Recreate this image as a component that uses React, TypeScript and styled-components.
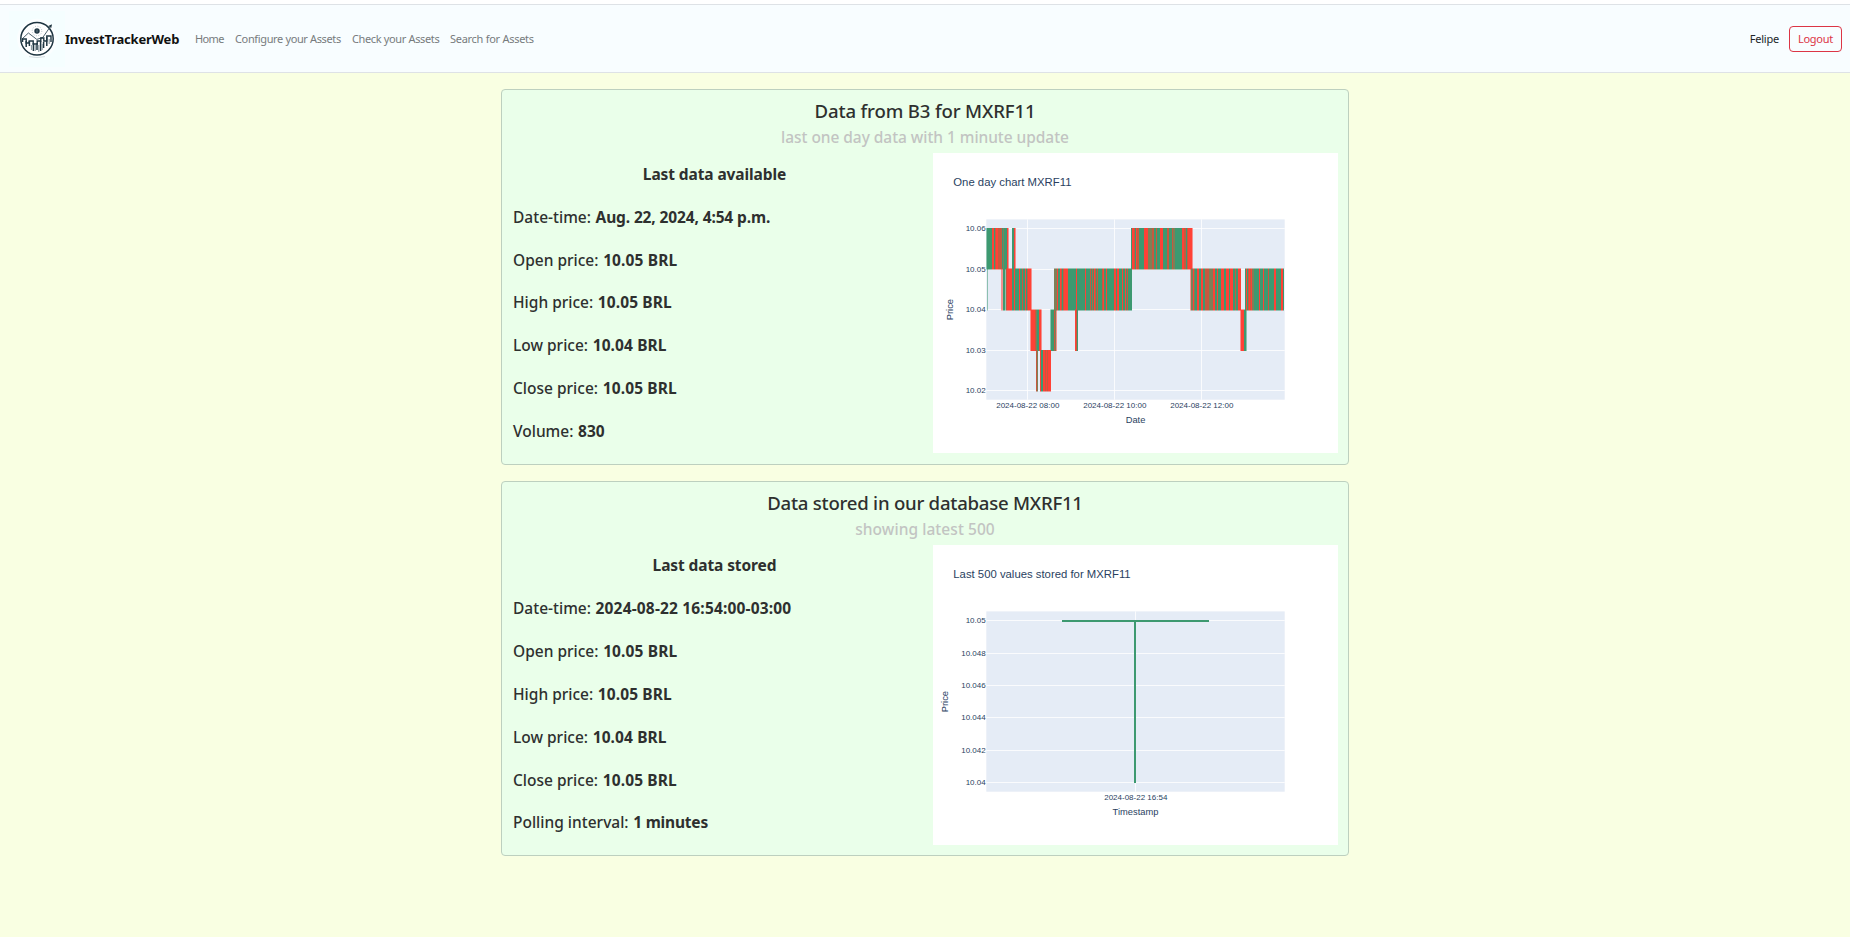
import React from 'react';
import styled, { createGlobalStyle } from 'styled-components';

const GlobalStyle = createGlobalStyle`
  * { box-sizing: border-box; }
  body {
    margin: 0;
    min-height: 100vh;
    background: #f9ffe2;
    color: #2e302f;
    font-family: 'Noto Sans', 'Open Sans', sans-serif;
    overflow: hidden;
  }
  h2, h3, h4, p { margin: 0; }
`;

const TopStrip = styled.div`
  height: 4px;
  background: #fff;
`;

const Navbar = styled.nav`
  display: flex;
  align-items: center;
  height: 69px;
  padding: 0 8px 0 9px;
  background: #f8fdff;
  border-top: 1px solid #dee2e6;
  border-bottom: 1px solid #dee2e6;
`;

const Brand = styled.a`
  display: flex;
  align-items: center;
  width: 186px;
  color: #111;
  font-size: 13px;
  font-weight: 700;
  letter-spacing: -0.22px;
  white-space: nowrap;
`;

const NavLink = styled.a<{ $width: number; $spacing: number }>`
  width: ${(p) => p.$width}px;
  color: #777b7d;
  font-size: 11px;
  letter-spacing: ${(p) => p.$spacing}px;
  white-space: nowrap;
`;

const UserName = styled.span`
  margin-left: auto;
  margin-right: 10px;
  color: #212529;
  font-size: 11px;
  letter-spacing: -0.2px;
`;

const LogoutButton = styled.button`
  width: 53px;
  height: 26px;
  padding: 0;
  background: transparent;
  border: 1px solid #dc3545;
  border-radius: 4px;
  color: #dc3545;
  font: 400 11px 'Noto Sans', sans-serif;
  letter-spacing: -0.25px;
`;

const Main = styled.main`
  display: flex;
  flex-direction: column;
  align-items: center;
  gap: 16px;
  padding-top: 16.3px;
`;

const Card = styled.section`
  width: 848px;
  height: 375.4px;
  padding: 0 10px;
  background: #eaffea;
  border: 1px solid #bdd0bf;
  border-radius: 4px;
`;

const CardHeader = styled.header`
  height: 63px;
  padding-top: 8px;
  text-align: center;
`;

const Title = styled.h2<{ $spacing: number }>`
  font-size: 18.6px;
  font-weight: 500;
  line-height: 25px;
  letter-spacing: ${(p) => p.$spacing}px;
`;

const Subtitle = styled.h3<{ $spacing: number }>`
  color: #c2c4c2;
  font-size: 15.5px;
  font-weight: 500;
  line-height: 28.6px;
  letter-spacing: ${(p) => p.$spacing}px;
`;

const Columns = styled.div`
  display: grid;
  grid-template-columns: 405px 405px;
  column-gap: 16px;
  height: 300px;
`;

const Facts = styled.div`
  display: grid;
  grid-template-rows: repeat(7, 1fr);
  align-items: center;
`;

const FactsHeading = styled.h4`
  padding-bottom: 1.6px;
  font-size: 15.5px;
  font-weight: 700;
  letter-spacing: -0.1px;
  text-align: center;
`;

const Fact = styled.p`
  padding: 0 0 1.6px 1px;
  font-size: 15.5px;
  font-weight: 500;
  white-space: pre;
`;

const Value = styled.b<{ $spacing?: number }>`
  margin-left: 0.6px;
  font-weight: 700;
  letter-spacing: ${(p) => p.$spacing ?? 0}px;
`;

const ChartSvg = styled.svg`
  display: block;
  background: #fff;
  font-family: 'Liberation Sans', Arial, sans-serif;
  fill: #2a3f5f;
`;

const Logo = () => (
  <svg width="56" height="56" viewBox="0 0 56 56" fill="none">
    <rect width="56" height="56" fill="#f5feff" />
    <circle cx="28" cy="27.8" r="20" fill="#fbfeff" />
    <circle cx="28" cy="27.8" r="16.2" fill="#fff" stroke="#1d3440" strokeWidth="1.5" />
    <path d="M20 45.6q8 2 16 0" stroke="#c9d5da" strokeWidth=".8" />
    <circle cx="28" cy="20" r="2.7" fill="#203743" />
    <path d="M28 18.6v2.8" stroke="#7f949d" strokeWidth=".7" />
    <circle cx="28" cy="20" r="4.8" stroke="#9db0b8" strokeWidth=".8" strokeDasharray="1 1.5" />
    <path d="M13 28 19.4 22l8.4 6.4 6-2 8.4-12" stroke="#4c626d" strokeWidth="1" />
    <path d="m39.3 15 3.6-1.8-.6 3.9z" fill="#203743" />
    <path d="M13.6 31v-3h3.6v4h3v-2h4v3h4v-3h3.6v-3h3v3h3v-5h4.2v6" stroke="#203743" strokeWidth="1.4" />
    <path d="M17.2 30v6M20.4 30v5M24.4 32v8M28 32v7M31.6 30v10M34.6 31v6M37.8 26v9" stroke="#203743" strokeWidth="1.5" />
    <path d="M22.4 34v5M26.2 34v6M29.8 34v7M33.2 33v6M40.2 28v5" stroke="#80929a" strokeWidth="1" />
  </svg>
);

const shades: Record<string, string> = {
  G: '#3d9970', R: '#ff4136', B: '#c6593f', O: '#7d8058', g: '#3d997088', r: '#ff413688',
};

// Each character is the shade of one pixel-wide candle column.
type Run = { x: number; top: number; bottom: number; columns: string };

const P06 = 75.5, P05 = 116, P04 = 157, P03 = 197.5, P02 = 238;

const runs: Run[] = [
  { x: 53, top: P06, bottom: P05, columns: 'gGGGGGRRGBRRBBBBGOGGGRr' },
  { x: 79, top: P06, bottom: P05, columns: 'GGRr' },
  { x: 54, top: P05, bottom: P04, columns: 'g' },
  { x: 68, top: P05, bottom: P04, columns: 'rr' },
  { x: 70, top: P05, bottom: P04, columns: 'GGgBRRRRRGGRGGGGRGGBGGRGBRRRr' },
  { x: 97, top: P04, bottom: P03, columns: 'rRRRRBOGGRRr' },
  { x: 117, top: P04, bottom: P03, columns: 'gGGGBOr' },
  { x: 103, top: P03, bottom: P02, columns: 'BO' },
  { x: 107, top: P03, bottom: P02, columns: 'RGGRRBRBRRR' },
  { x: 121, top: P05, bottom: P04, columns: 'OOORGGRBGBRRRRGGGGGGGGRGGGGGGGGRGGGGBGBGRBGBGGGGBRGGRGGGGGGGRRGRRGGGRGGRGBGGGG' },
  { x: 142, top: P04, bottom: P03, columns: 'RBG' },
  { x: 198, top: P06, bottom: P05, columns: 'GRRBGRBBGGGGGRRRROOOOBBGGBGGGRRRGGGGBBGGGBOOGGGGGGGRRBBGBRRRRr' },
  { x: 257, top: P05, bottom: P04, columns: 'rOOROGGRRGGRRGGBBBBOOOORRGGRGGGRRRGGRRRGRRRGGBGGRRR' },
  { x: 307, top: P04, bottom: P03, columns: 'rRRRGGg' },
  { x: 312, top: P05, bottom: P04, columns: 'GRGBRBROOGGGGGRGGGRGGGGBGGGGGRRGGGGGRRG' },
];

type Tick = [number, string];

const ChartFrame = ({ title, xTitle, priceX, xTicks, yTicks, children }: {
  title: string; xTitle: string; priceX: number; xTicks: Tick[]; yTicks: Tick[]; children: React.ReactNode;
}) => (
  <ChartSvg width="405" height="300" viewBox="0 0 405 300">
    <text x="20.3" y="33" fontSize="11.33">{title}</text>
    <rect x="53.3" y="66.4" width="298.4" height="180.3" fill="#e5ecf6" />
    {xTicks.map(([x]) => <path key={x} d={`M${x} 66.4V246.7`} stroke="#fff" strokeWidth=".8" />)}
    {yTicks.map(([y]) => <path key={y} d={`M53.3 ${y}H351.7`} stroke="#fff" strokeWidth=".8" />)}
    {children}
    {xTicks.map(([x, label]) => <text key={x} x={x + 0.3} y="255.3" fontSize="8" textAnchor="middle">{label}</text>)}
    {yTicks.map(([y, label]) => <text key={y} x="52.7" y={y + 2.5} fontSize="8" textAnchor="end">{label}</text>)}
    <text x="202.5" y="270" fontSize="9.33" textAnchor="middle">{xTitle}</text>
    <text transform={`translate(${priceX} 156.6) rotate(-90)`} fontSize="9.33" textAnchor="middle">Price</text>
  </ChartSvg>
);

const DayChart = () => (
  <ChartFrame
    title="One day chart MXRF11"
    xTitle="Date"
    priceX={20}
    xTicks={[[94.5, '2024-08-22 08:00'], [181.5, '2024-08-22 10:00'], [268.5, '2024-08-22 12:00']]}
    yTicks={[[75.5, '10.06'], [116.5, '10.05'], [156.5, '10.04'], [197.5, '10.03'], [237.5, '10.02']]}
  >
    {runs.map((run) =>
      run.columns.split('').map((c, i) => (
        <rect
          key={`${run.x}-${run.top}-${i}`}
          x={run.x + i}
          y={run.top - 0.5}
          width="1"
          height={run.bottom - run.top + 1}
          fill={shades[c]}
        />
      )),
    )}
  </ChartFrame>
);

const StoredChart = () => (
  <ChartFrame
    title="Last 500 values stored for MXRF11"
    xTitle="Timestamp"
    priceX={15}
    xTicks={[[202.5, '2024-08-22 16:54']]}
    yTicks={[[75.5, '10.05'], [108.5, '10.048'], [140.5, '10.046'], [172.5, '10.044'], [205.5, '10.042'], [237.5, '10.04']]}
  >
    <path d="M129 76H276M202 76V238" stroke="#3d9970" strokeWidth="2" />
  </ChartFrame>
);

type FactItem = { label: string; value: string; spacing?: number };

const DataCard = ({ title, titleSpacing, subtitle, subtitleSpacing, heading, facts, chart }: {
  title: string; titleSpacing: number; subtitle: string; subtitleSpacing: number;
  heading: string; facts: FactItem[]; chart: React.ReactNode;
}) => (
  <Card>
    <CardHeader>
      <Title $spacing={titleSpacing}>{title}</Title>
      <Subtitle $spacing={subtitleSpacing}>{subtitle}</Subtitle>
    </CardHeader>
    <Columns>
      <Facts>
        <FactsHeading>{heading}</FactsHeading>
        {facts.map((f) => (
          <Fact key={f.label}>
            {f.label}: <Value $spacing={f.spacing}>{f.value}</Value>
          </Fact>
        ))}
      </Facts>
      {chart}
    </Columns>
  </Card>
);

const prices: FactItem[] = [
  { label: 'Open price', value: '10.05 BRL', spacing: 0.13 },
  { label: 'High price', value: '10.05 BRL', spacing: 0.1 },
  { label: 'Low price', value: '10.04 BRL', spacing: 0.1 },
  { label: 'Close price', value: '10.05 BRL', spacing: 0.13 },
];

export default function App() {
  return (
    <>
      <GlobalStyle />
      <TopStrip />
      <Navbar>
        <Brand><Logo />InvestTrackerWeb</Brand>
        <NavLink $width={40} $spacing={-0.6}>Home</NavLink>
        <NavLink $width={117} $spacing={-0.36}>Configure your Assets</NavLink>
        <NavLink $width={98} $spacing={-0.36}>Check your Assets</NavLink>
        <NavLink $width={90} $spacing={-0.28}>Search for Assets</NavLink>
        <UserName>Felipe</UserName>
        <LogoutButton>Logout</LogoutButton>
      </Navbar>
      <Main>
        <DataCard
          title="Data from B3 for MXRF11"
          titleSpacing={-0.15}
          subtitle="last one day data with 1 minute update"
          subtitleSpacing={-0.05}
          heading="Last data available"
          facts={[
            { label: 'Date-time', value: 'Aug. 22, 2024, 4:54 p.m.', spacing: -0.13 },
            ...prices,
            { label: 'Volume', value: '830' },
          ]}
          chart={<DayChart />}
        />
        <DataCard
          title="Data stored in our database MXRF11"
          titleSpacing={-0.25}
          subtitle="showing latest 500"
          subtitleSpacing={0.06}
          heading="Last data stored"
          facts={[
            { label: 'Date-time', value: '2024-08-22 16:54:00-03:00', spacing: 0.17 },
            ...prices,
            { label: 'Polling interval', value: '1 minutes', spacing: -0.2 },
          ]}
          chart={<StoredChart />}
        />
      </Main>
    </>
  );
}
